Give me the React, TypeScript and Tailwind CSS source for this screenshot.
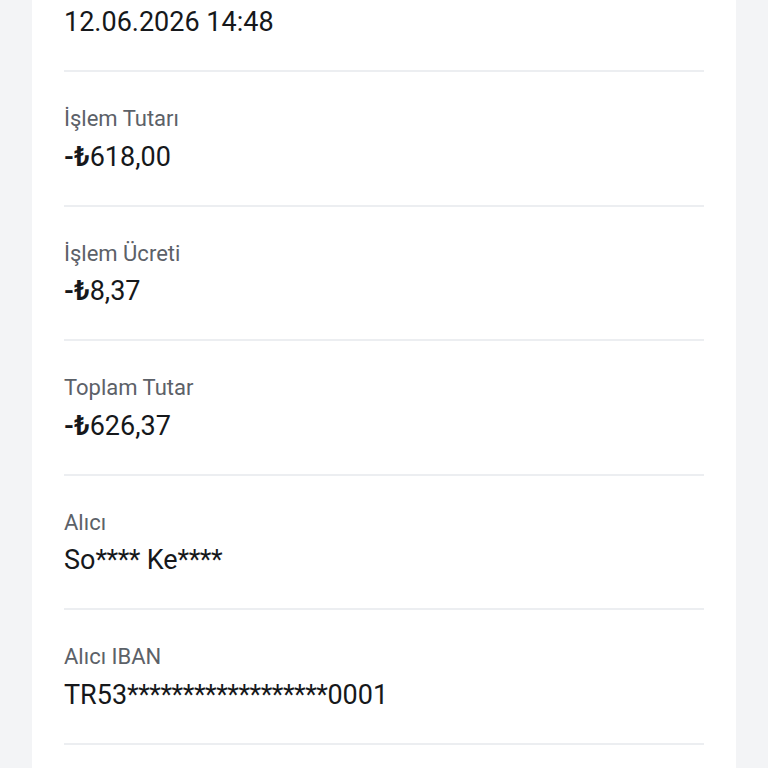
import React from "react";

type Row = { label?: string; value: string };

const rows: Row[] = [
  { value: "12.06.2026 14:48" },
  { label: "İşlem Tutarı", value: "-₺618,00" },
  { label: "İşlem Ücreti", value: "-₺8,37" },
  { label: "Toplam Tutar", value: "-₺626,37" },
  { label: "Alıcı", value: "So**** Ke****" },
  { label: "Alıcı IBAN", value: "TR53******************0001" },
];

// split value so the sign/currency and mask stars can get their own look
function Value({ text }: { text: string }) {
  const parts = text.split(/(-₺|\*+)/).filter(Boolean);
  return (
    <>
      {parts.map((p, i) =>
        p === "-₺" ? (
          <span key={i} className="font-semibold">
            {p}
          </span>
        ) : p.startsWith("*") ? (
          <span key={i} className="tracking-[-0.5px]">
            {p}
          </span>
        ) : (
          <span key={i}>{p}</span>
        )
      )}
    </>
  );
}

export default function App() {
  return (
    <div
      className="min-h-screen bg-[#f3f4f6] flex justify-center"
      style={{ fontFamily: "Roboto, 'Noto Sans', Arial, sans-serif" }}
    >
      <div className="w-[704px] bg-white px-8 pb-10">
        {rows.map((r, i) => (
          <div
            key={i}
            className={
              "border-b-2 border-[#eceef1] pb-[31px] " + (r.label ? "pt-[33px]" : "pt-[5px]")
            }
          >
            {r.label && (
              <div className="text-[22px] leading-[28px] text-[#5c6168]">{r.label}</div>
            )}
            <div
              className={
                "text-[27px] leading-[34px] text-[#16181b] " + (r.label ? "mt-[6.5px]" : "")
              }
            >
              <Value text={r.value} />
            </div>
          </div>
        ))}
      </div>
    </div>
  );
}
